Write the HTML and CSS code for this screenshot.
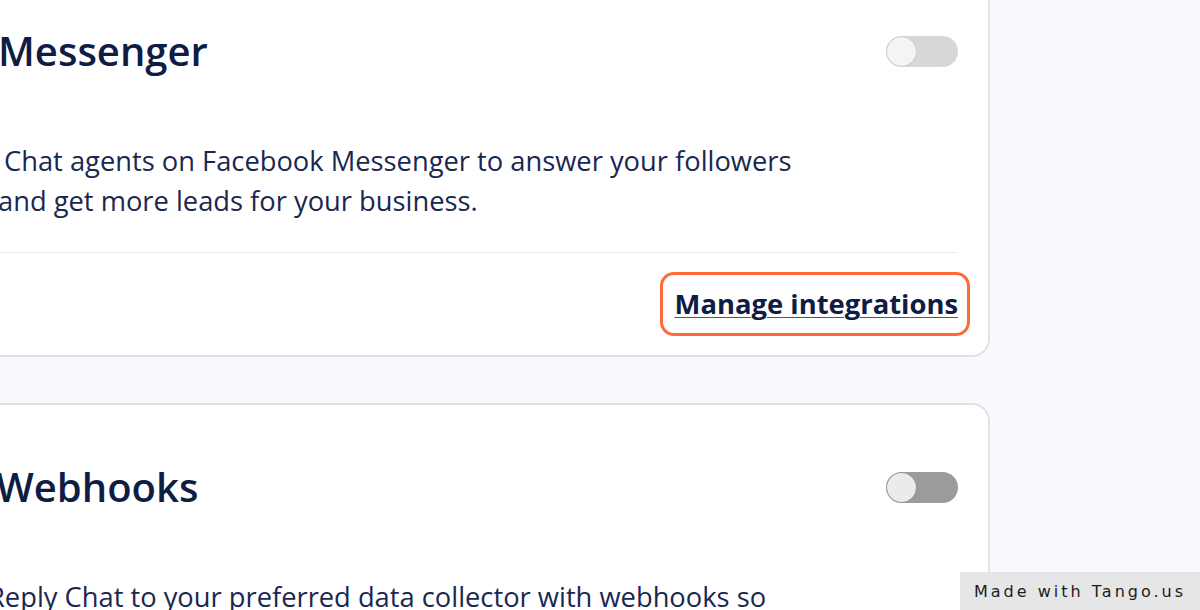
FILE: index.html
```html
<!DOCTYPE html>
<html lang="en">
<head>
<meta charset="utf-8">
<title>Integrations</title>
<link rel="stylesheet" href="styles.css">
</head>
<body>
<main class="stack">
  <section class="card">
    <div class="card-head">
      <h2 class="card-title">Messenger</h2>
      <span class="toggle toggle-light"><span class="knob"></span></span>
    </div>
    <p class="card-text text-indent">Chat agents on Facebook Messenger to answer your followers<br>and get more leads for your business.</p>
    <div class="card-foot">
      <span class="link-wrap">
        <a class="manage-link" href="#">Manage integrations</a>
        <span class="highlight"></span>
      </span>
    </div>
  </section>
  <section class="card card-shift">
    <div class="card-head">
      <h2 class="card-title">Webhooks</h2>
      <span class="toggle toggle-dark"><span class="knob"></span></span>
    </div>
    <p class="card-text text-outdent">Reply Chat to your preferred data collector with webhooks so<br>you can automate your workflow.</p>
  </section>
</main>
<div class="tango-badge">Made with Tango.us</div>
</body>
</html>
```

FILE: styles.css
```css
html, body {
  margin: 0;
  padding: 0;
}

body {
  background: #f8f9fc;
  font-family: "Open Sans", "Noto Sans", sans-serif;
  color: #13214a;
  overflow: hidden;
  height: 610px;
}

.stack {
  display: flex;
  flex-direction: column;
  gap: 46px;
  width: 1090px;
  margin: -33px 0 0 -100px;
}

.card {
  background: #fff;
  border: 2px solid #e2e2e4;
  border-radius: 18px;
  padding: 54px 30px 0 96px;
}

.card-shift {
  padding-left: 94px;
}

.card-head {
  height: 56px;
  display: flex;
  align-items: center;
  justify-content: space-between;
}

.card-title {
  margin: 0;
  font-size: 40px;
  line-height: 56px;
  font-weight: 600;
  color: #0f1d45;
}

.toggle {
  width: 72px;
  height: 31px;
  border-radius: 16px;
  display: flex;
  align-items: center;
  padding: 0 1px;
  box-sizing: border-box;
}

.toggle-light {
  background: #d7d7d7;
}

.toggle-dark {
  background: #9b9b9b;
}

.knob {
  width: 29px;
  height: 29px;
  border-radius: 50%;
  background: #f4f4f4;
  box-shadow: 0 0 1px rgba(0, 0, 0, 0.25);
}

.toggle-dark .knob {
  background: #ebebeb;
}

.card-text {
  margin: 62px 0 0;
  font-size: 27.3px;
  line-height: 40px;
  color: #1a2850;
  padding-bottom: 31px;
  border-bottom: 1px solid #ececec;
  white-space: nowrap;
}

.text-indent {
  text-indent: 6px;
}

.text-outdent {
  text-indent: -8px;
}

.card-foot {
  padding: 35px 0;
  display: flex;
  justify-content: flex-end;
  font-size: 27px;
  line-height: 32px;
  height: 32px;
}

.link-wrap {
  position: relative;
  display: block;
  height: 32px;
}

.manage-link {
  font-size: 27.4px;
  font-weight: 700;
  color: #0f1d45;
  text-decoration: underline;
  text-decoration-color: #3553c9;
  text-decoration-thickness: 1px;
  text-underline-offset: 3px;
}

.highlight {
  position: absolute;
  top: -16px;
  bottom: -16px;
  left: -15px;
  right: -12px;
  border: 3px solid #ff6a3a;
  border-radius: 14px;
  pointer-events: none;
}

.tango-badge {
  position: fixed;
  right: 0;
  bottom: 0;
  width: 240px;
  height: 38px;
  background: #e6e6e6;
  color: #1c1c1c;
  font-family: "DejaVu Sans", sans-serif;
  font-size: 16px;
  letter-spacing: 3px;
  display: flex;
  align-items: center;
  justify-content: center;
}
```
